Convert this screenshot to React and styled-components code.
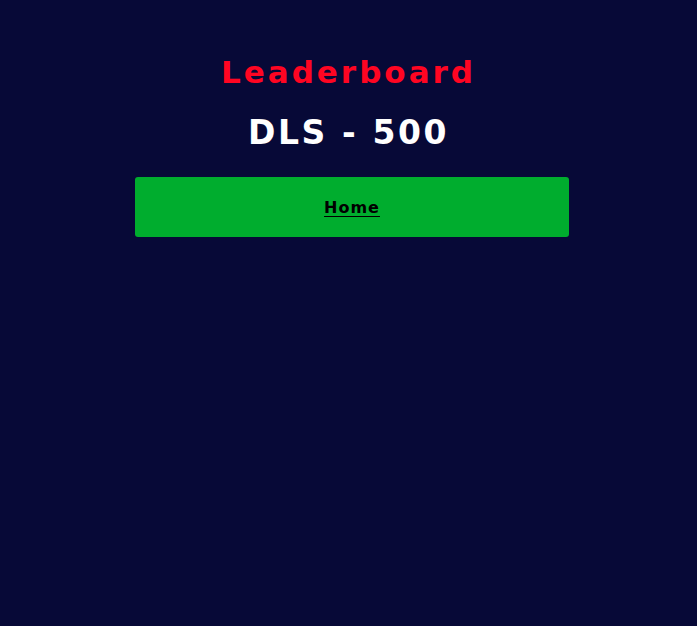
import React from "react";
import styled, { createGlobalStyle } from "styled-components";

const GlobalStyle = createGlobalStyle`
  html, body {
    margin: 0;
    padding: 0;
    background: #070937;
    min-height: 100%;
  }
  body {
    font-family: "DejaVu Sans", "Liberation Sans", sans-serif;
  }
`;

const Page = styled.div`
  min-height: 626px;
  display: flex;
  flex-direction: column;
  align-items: center;
  padding-top: 55px;
  box-sizing: border-box;
`;

const Title = styled.h1`
  margin: 0;
  color: #ff0522;
  font-size: 31px;
  font-weight: bold;
  letter-spacing: 3px;
  line-height: 34px;
  text-align: center;
`;

const Subtitle = styled.h2`
  margin: 26px 0 0;
  color: #ffffff;
  font-size: 33px;
  font-weight: bold;
  letter-spacing: 2.6px;
  line-height: 36px;
  text-align: center;
`;

const HomeButton = styled.a`
  margin: 26px 0 0 7px;
  width: 434px;
  height: 60px;
  display: flex;
  align-items: center;
  justify-content: center;
  background: #00ad2e;
  border-radius: 3px;
  color: #000000;
  font-size: 16px;
  font-weight: bold;
  letter-spacing: 1px;
  text-decoration: underline;
  text-underline-offset: 3px;
  cursor: pointer;
`;

export default function App() {
  return (
    <>
      <GlobalStyle />
      <Page>
        <Title>Leaderboard</Title>
        <Subtitle>DLS - 500</Subtitle>
        <HomeButton href="#">Home</HomeButton>
      </Page>
    </>
  );
}
